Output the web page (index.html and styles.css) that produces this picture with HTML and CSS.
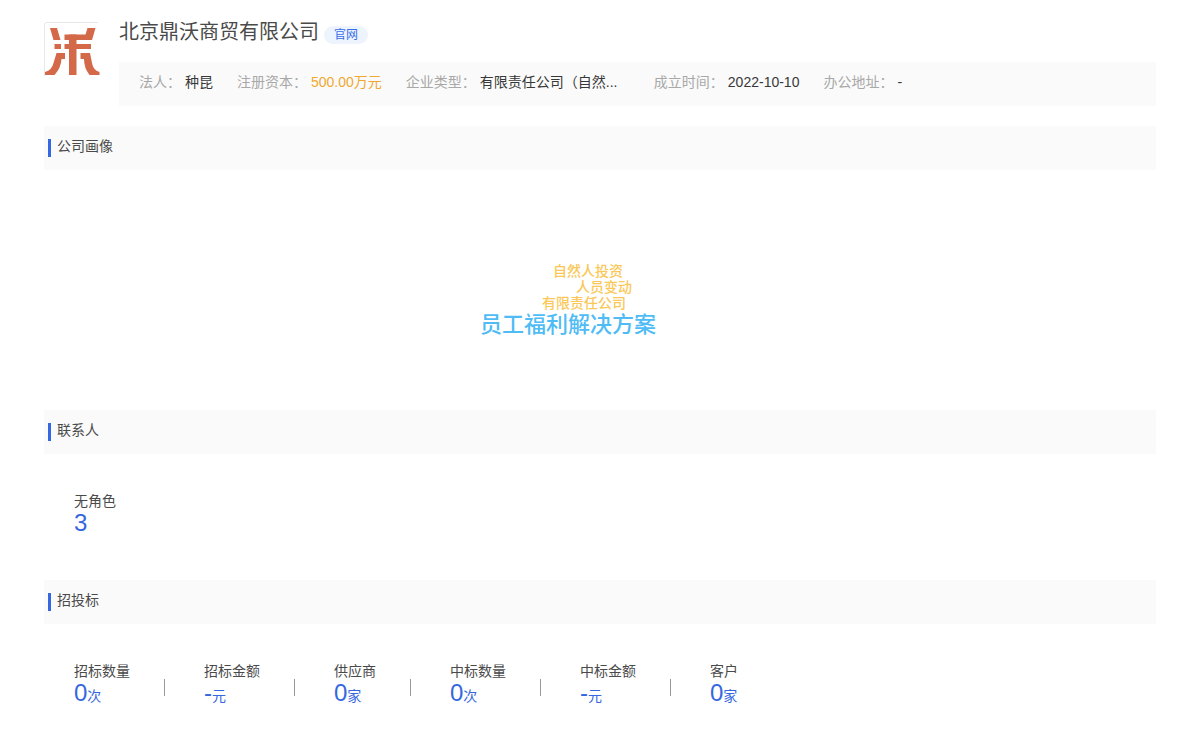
FILE: index.html
```html
<!DOCTYPE html>
<html lang="zh-CN">
<head>
<meta charset="utf-8">
<meta name="viewport" content="width=device-width, initial-scale=1">
<title>北京鼎沃商贸有限公司</title>
<link rel="stylesheet" href="styles.css">
</head>
<body>
<main class="page">
  <header class="company">
    <svg class="logo" viewBox="0 0 56 56" role="img" aria-label="公司标志">
      <path class="logo-frame" d="M.5 54V3Q.5 .5 3 .5H54"/>
      <g class="logo-mark">
        <path d="M6 6H13L16.500 18H9.500Z"/>
        <path d="M43.500 6H51.500L48 18H20.500V12.500H41.500Z"/>
        <path d="M10.500 22H17V27H10.500Z"/>
        <path d="M20.500 22H47V27H20.500Z"/>
        <path d="M25 12.500H32.500V53H25Z"/>
        <path d="M12.500 31H21V37H17.500Q17 46 10.500 53H1V50Q8 48 9.500 41Z"/>
        <path d="M36.500 31H46L48 41Q49 48 55.500 50V53H45.500Q40 46 40 37H36.500Z"/>
      </g>
    </svg>
    <div class="company-body">
      <div class="title-row">
        <h1 class="name">北京鼎沃商贸有限公司</h1>
        <a class="site" href="#">官网</a>
      </div>
      <dl class="facts">
        <div class="fact"><dt>法人：</dt><dd>种昆</dd></div>
        <div class="fact"><dt>注册资本：</dt><dd class="money">500.00万元</dd></div>
        <div class="fact"><dt>企业类型：</dt><dd class="kind">有限责任公司（自然...</dd></div>
        <div class="fact"><dt>成立时间：</dt><dd>2022-10-10</dd></div>
        <div class="fact"><dt>办公地址：</dt><dd>-</dd></div>
      </dl>
    </div>
  </header>

  <section>
    <h2 class="heading">公司画像</h2>
    <div class="cloud">
      <span class="word word-invest">自然人投资</span>
      <span class="word word-staff">人员变动</span>
      <span class="word word-limited">有限责任公司</span>
      <span class="word word-main">员工福利解决方案</span>
    </div>
  </section>

  <section>
    <h2 class="heading">联系人</h2>
    <dl class="stats">
      <div class="stat"><dt>无角色</dt><dd>3</dd></div>
    </dl>
  </section>

  <section>
    <h2 class="heading">招投标</h2>
    <dl class="stats">
      <div class="stat"><dt>招标数量</dt><dd>0<small>次</small></dd></div>
      <div class="stat"><dt>招标金额</dt><dd>-<small>元</small></dd></div>
      <div class="stat"><dt>供应商</dt><dd>0<small>家</small></dd></div>
      <div class="stat"><dt>中标数量</dt><dd>0<small>次</small></dd></div>
      <div class="stat"><dt>中标金额</dt><dd>-<small>元</small></dd></div>
      <div class="stat"><dt>客户</dt><dd>0<small>家</small></dd></div>
    </dl>
  </section>
</main>
</body>
</html>
```
FILE: styles.css
```css
* { box-sizing: border-box; }

body {
  margin: 0;
  background: #fff;
  color: #4a4a4a;
  font-family: "Liberation Sans", "Noto Sans CJK SC", sans-serif;
  font-size: 14px;
  line-height: 20px;
}

h1, h2, dl, dd { margin: 0; font-weight: 400; }

.page { padding: 16px 44px; }

.company {
  display: flex;
  gap: 19px;
  margin-bottom: 20px;
}
.logo { flex: none; width: 56px; height: 56px; margin-top: 6px; }
.logo-frame { fill: none; stroke: #e8e8e8; }
.logo-mark { fill: #d4694a; }
.company-body { flex: 1; min-width: 0; }

.title-row { display: flex; align-items: center; gap: 5px; margin-bottom: 14px; }
.name { font-size: 20px; line-height: 32px; }
.site {
  margin-top: 6px;
  padding: 0 10px;
  border-radius: 9px;
  background: #edf4fe;
  color: #3a6fe8;
  font-size: 12px;
  line-height: 18px;
  text-decoration: none;
}

.facts {
  display: flex;
  flex-wrap: wrap;
  gap: 0 24px;
  padding: 10px 20px 14px;
  background: #fafafa;
}
.fact { display: flex; gap: 4px; }
.fact dt { color: #a8a8a8; }
.fact dd { color: #383838; }
.fact .money { color: #f0a830; }
.fact .kind { width: 150px; white-space: nowrap; }

.heading {
  display: flex;
  align-items: center;
  gap: 6px;
  padding: 10px 4px 14px;
  background: #fafafa;
  font-size: 14px;
  line-height: 20px;
}
.heading::before {
  content: "";
  width: 3px;
  height: 18px;
  margin: 3px 0 -1px;
  background: #3567e0;
}

.cloud {
  position: relative;
  width: 240px;
  height: 240px;
  margin: 0 auto;
}
.word {
  position: absolute;
  color: #fac858;
  font-weight: 500;
  line-height: 16px;
  white-space: nowrap;
}
.word-invest { left: 73px; top: 93px; }
.word-staff { left: 96px; top: 109px; }
.word-limited { left: 62px; top: 125px; }
.word-main { left: 0; top: 142px; color: #4fbcf5; font-size: 22px; line-height: 26px; }

.stats {
  display: flex;
  flex-wrap: wrap;
  padding: 36px 30px 46px;
}
.stat { display: grid; column-gap: 34px; }
.stat dt { line-height: 22px; }
.stat dd { color: #3567e0; font-size: 24px; line-height: 22px; }
.stat small { font-size: 14px; }
.stat:not(:last-child)::after {
  content: "";
  grid-column: 2;
  grid-row: 1 / span 2;
  align-self: end;
  width: 1px;
  height: 17px;
  margin-bottom: 11px;
  margin-right: 39px;
  background: #999;
}
```
